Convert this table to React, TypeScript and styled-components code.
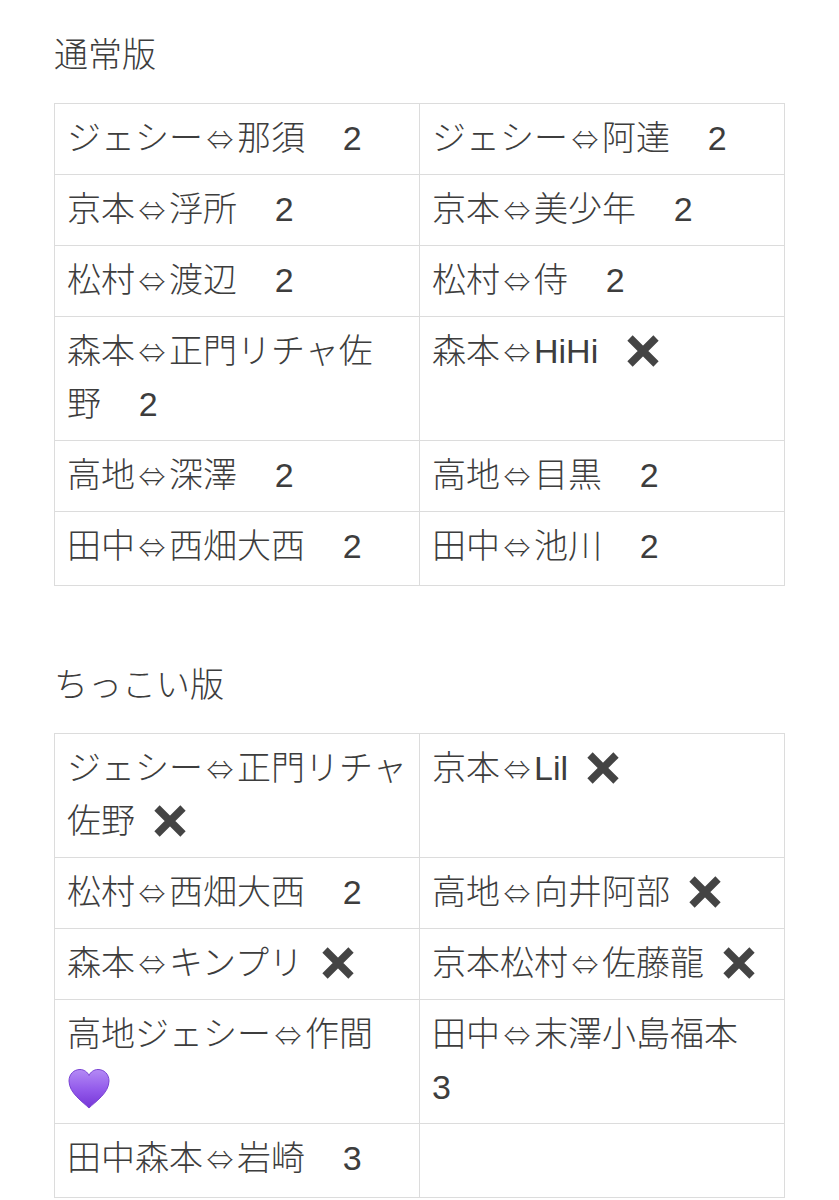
import React from "react";
import styled, { createGlobalStyle } from "styled-components";

const GlobalStyle = createGlobalStyle`
  html, body {
    margin: 0;
    padding: 0;
    background: #ffffff;
  }
  body {
    font-family: "Liberation Sans", "Noto Sans CJK JP", sans-serif;
    color: #3d3d3d;
  }
`;

const Page = styled.main`
  width: 731px;
  padding: 30px 0 0 54px;
`;

const Section = styled.section`
  & + & {
    margin-top: 74px;
  }
`;

const Title = styled.h2`
  margin: 0 0 22px;
  font-size: 34px;
  font-weight: 300;
  line-height: 51px;
  color: #3d3d3d;
`;

const Table = styled.table`
  width: 731px;
  border-collapse: collapse;
  table-layout: fixed;
`;

const Row = styled.tr`
  &:last-child > td {
    padding-bottom: 12px;
  }
`;

const Cell = styled.td`
  border: 1px solid #dcdcdc;
  padding: 8px 12px 9px;
  vertical-align: top;
  font-size: 34px;
  font-weight: 300;
  line-height: 53px;
  color: #3d3d3d;
`;

const Arrow = styled.span`
  font-family: "Noto Sans CJK JP", sans-serif;
  font-size: 27px;
  line-height: 0;
  margin: 0 3.5px;
`;

const MarkX = styled.svg`
  display: inline-block;
  width: 34px;
  height: 34px;
  vertical-align: -5px;
  margin-left: 9px;
`;

const Heart = styled.svg`
  display: inline-block;
  width: 44px;
  height: 42px;
  vertical-align: -11px;
`;

type Mark = "x" | "heart";
type CellData = { text: string; mark?: Mark };

const CrossIcon = () => (
  <MarkX viewBox="0 0 34 34" aria-hidden>
    <path
      d="M4 4 L30 30 M30 4 L4 30"
      stroke="#444444"
      strokeWidth="7.5"
      strokeLinecap="butt"
      fill="none"
    />
  </MarkX>
);

const HeartIcon = () => (
  <Heart viewBox="0 0 44 42" aria-hidden>
    <defs>
      <linearGradient id="hg" x1="0" y1="0" x2="0" y2="1">
        <stop offset="0" stopColor="#b48af5" />
        <stop offset="0.55" stopColor="#9158ea" />
        <stop offset="1" stopColor="#7636d6" />
      </linearGradient>
    </defs>
    <path
      d="M22 40 C16 34 2 25 2 13 C2 6 7 1.5 13 1.5 C17 1.5 20.5 4 22 7.5 C23.5 4 27 1.5 31 1.5 C37 1.5 42 6 42 13 C42 25 28 34 22 40 Z"
      fill="url(#hg)"
      stroke="#7a44d4"
      strokeWidth="1"
    />
  </Heart>
);

const renderText = (text: string) => {
  const parts = text.split("⇔");
  return parts.map((p, i) => (
    <React.Fragment key={i}>
      {i > 0 && <Arrow>⇔</Arrow>}
      {p}
    </React.Fragment>
  ));
};

const renderCell = (c: CellData, i: number) => (
  <Cell key={i}>
    {renderText(c.text)}
    {c.mark === "x" && <CrossIcon />}
    {c.mark === "heart" && <HeartIcon />}
  </Cell>
);

const GAP = "\u00a0\u00a0\u00a0\u00a0";
const SP = "\u00a0";

const normal: CellData[][] = [
  [{ text: `ジェシー⇔那須${GAP}2` }, { text: `ジェシー⇔阿達${GAP}2` }],
  [{ text: `京本⇔浮所${GAP}2` }, { text: `京本⇔美少年${GAP}2` }],
  [{ text: `松村⇔渡辺${GAP}2` }, { text: `松村⇔侍${GAP}2` }],
  [{ text: `森本⇔正門リチャ佐野${GAP}2` }, { text: `森本⇔HiHi${SP}${SP}`, mark: "x" }],
  [{ text: `高地⇔深澤${GAP}2` }, { text: `高地⇔目黒${GAP}2` }],
  [{ text: `田中⇔西畑大西${GAP}2` }, { text: `田中⇔池川${GAP}2` }],
];

const small: CellData[][] = [
  [{ text: `ジェシー⇔正門リチャ佐野${SP}`, mark: "x" }, { text: `京本⇔Lil${SP}`, mark: "x" }],
  [{ text: `松村⇔西畑大西${GAP}2` }, { text: `高地⇔向井阿部${SP}`, mark: "x" }],
  [{ text: `森本⇔キンプリ${SP}`, mark: "x" }, { text: `京本松村⇔佐藤龍${SP}`, mark: "x" }],
  [{ text: "高地ジェシー⇔作間", mark: "heart" }, { text: "田中⇔末澤小島福本　3" }],
  [{ text: `田中森本⇔岩崎${GAP}3` }, { text: "" }],
];

const Block = ({ title, rows }: { title: string; rows: CellData[][] }) => (
  <Section>
    <Title>{title}</Title>
    <Table>
      <tbody>
        {rows.map((r, i) => (
          <Row key={i}>{r.map(renderCell)}</Row>
        ))}
      </tbody>
    </Table>
  </Section>
);

export default function App() {
  return (
    <>
      <GlobalStyle />
      <Page>
        <Block title="通常版" rows={normal} />
        <Block title="ちっこい版" rows={small} />
      </Page>
    </>
  );
}
